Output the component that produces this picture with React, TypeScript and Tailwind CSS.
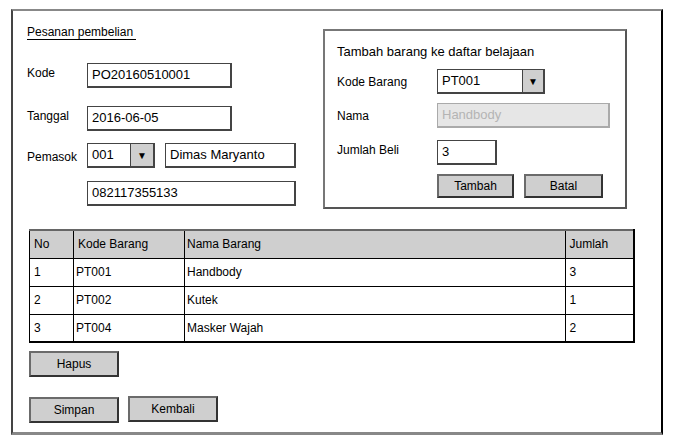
import React from "react";

const font = { fontFamily: '"Liberation Sans", Arial, sans-serif' };

function Btn({ label, w }: { label: string; w: string }) {
  return (
    <div
      className={`${w} h-full flex items-center justify-center bg-[#cfcfcf] border-2 border-[#6b6b6b] border-b-[#333] border-r-[#333] text-[12px] text-black`}
    >
      {label}
    </div>
  );
}

function Input({ value, w }: { value: string; w: string }) {
  return (
    <div
      className={`${w} h-[25px] flex items-center pl-[4px] bg-white border border-[#444] border-r-2 border-b-2 text-[13px] text-black`}
    >
      {value}
    </div>
  );
}

function Combo({ value, w, textW }: { value: string; w: string; textW: string }) {
  return (
    <div className={`${w} h-[25px] flex border border-[#444] border-r-2 border-b-2 bg-white`}>
      <div className={`${textW} flex items-center pl-[4px] text-[13px] text-black border-r border-[#444]`}>
        {value}
      </div>
      <div className="flex-1 flex items-center justify-center bg-[#cfcfcf] text-[10px]">▼</div>
    </div>
  );
}

const rows = [
  ["1", "PT001", "Handbody", "3"],
  ["2", "PT002", "Kutek", "1"],
  ["3", "PT004", "Masker Wajah", "2"],
];

export default function App() {
  return (
    <div className="w-[673px] h-[444px] bg-white pt-[9px] pl-[11px]" style={font}>
      <div className="box-border w-[652px] h-[426px] border-t-2 border-t-[#888] border-l-2 border-l-[#444] border-r-2 border-r-black border-b-[3px] border-b-[#888]">
        {/* top section */}
        <div className="flex pl-[14px]">
          <div className="w-[270px] flex flex-col">
            <div className="mt-[14px] w-[109px] border-b border-black text-[12px] leading-[14px] text-black">
              Pesanan pembelian
            </div>
            <div className="mt-[23px] flex items-start">
              <div className="w-[60px] pt-[2px] text-[12px] leading-[16px]">Kode</div>
              <Input value="PO20160510001" w="w-[145px]" />
            </div>
            <div className="mt-[18px] flex items-start">
              <div className="w-[60px] pt-[2px] text-[12px] leading-[16px]">Tanggal</div>
              <Input value="2016-06-05" w="w-[145px]" />
            </div>
            <div className="mt-[12px] flex items-start">
              <div className="w-[60px] pt-[6px] text-[12px] leading-[16px]">Pemasok</div>
              <Combo value="001" w="w-[68px]" textW="w-[43px]" />
              <div className="ml-[10px]">
                <Input value="Dimas Maryanto" w="w-[131px]" />
              </div>
            </div>
            <div className="mt-[13px] ml-[60px]">
              <Input value="082117355133" w="w-[209px]" />
            </div>
          </div>

          <div className="ml-[26px] mt-[18px] box-border w-[304px] h-[180px] border-2 border-[#777] border-r-[#555] border-b-[#555] pl-[12px]">
            <div className="mt-[13px] text-[13px] leading-[16px]">Tambah barang ke daftar belajaan</div>
            <div className="mt-[9px] flex items-center">
              <div className="w-[100px] text-[12px]">Kode Barang</div>
              <Combo value="PT001" w="w-[108px]" textW="w-[85px]" />
            </div>
            <div className="mt-[9px] flex items-center">
              <div className="w-[100px] text-[12px]">Nama</div>
              <div className="w-[173px] h-[25px] flex items-center pl-[4px] bg-[#e6e6e6] border border-[#aaa] border-r-2 border-b-2 text-[13px] text-[#b4b4b4]">
                Handbody
              </div>
            </div>
            <div className="mt-[12px] flex items-start">
              <div className="w-[100px] pt-[1px] text-[12px]">Jumlah Beli</div>
              <Input value="3" w="w-[60px]" />
            </div>
            <div className="mt-[9px] ml-[100px] h-[24px] flex gap-[10px]">
              <Btn label="Tambah" w="w-[77px]" />
              <Btn label="Batal" w="w-[79px]" />
            </div>
          </div>
        </div>

        {/* table */}
        <div className="ml-[16px] mt-[20px] w-[606px]">
          <table className="w-full border-collapse text-[12px] text-black">
            <thead>
              <tr className="h-[28px] bg-[#cfcfcf]">
                <th className="w-[44px] border border-black border-t-2 border-t-[#666] text-left font-normal pl-[4px]">No</th>
                <th className="w-[111px] border border-black border-t-2 border-t-[#666] text-left font-normal pl-[4px]">Kode Barang</th>
                <th className="border border-black border-t-2 border-t-[#666] text-left font-normal pl-[2px]">Nama Barang</th>
                <th className="w-[69px] border border-black border-t-2 border-t-[#666] border-r-2 text-left font-normal pl-[4px]">Jumlah</th>
              </tr>
            </thead>
            <tbody>
              {rows.map((r, i) => (
                <tr key={i} className="h-[28px]">
                  <td className={`border border-black pl-[4px] ${i === 2 ? "border-b-2" : ""}`}>{r[0]}</td>
                  <td className={`border border-black pl-[2px] ${i === 2 ? "border-b-2" : ""}`}>{r[1]}</td>
                  <td className={`border border-black pl-[2px] ${i === 2 ? "border-b-2" : ""}`}>{r[2]}</td>
                  <td className={`border border-black border-r-2 pl-[4px] ${i === 2 ? "border-b-2" : ""}`}>{r[3]}</td>
                </tr>
              ))}
            </tbody>
          </table>
        </div>

        <div className="ml-[16px] mt-[8px] h-[26px] flex">
          <Btn label="Hapus" w="w-[90px]" />
        </div>

        <div className="ml-[16px] mt-[20px] h-[26px] flex gap-[9px] items-end">
          <Btn label="Simpan" w="w-[90px]" />
          <div className="h-[26px] -mt-px self-start">
            <Btn label="Kembali" w="w-[90px]" />
          </div>
        </div>
      </div>
    </div>
  );
}
